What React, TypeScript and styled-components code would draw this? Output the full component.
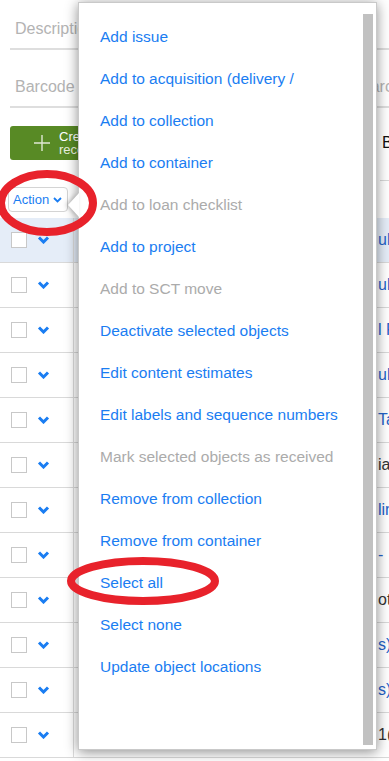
import styled, { createGlobalStyle } from "styled-components";

const GlobalStyle = createGlobalStyle`
  html, body {
    margin: 0;
    padding: 0;
    background: #fff;
  }
  body {
    font-family: "Liberation Sans", Arial, sans-serif;
  }
`;

const menuItems: { label: string; disabled?: boolean }[] = [
  { label: "Add issue" },
  { label: "Add to acquisition (delivery /" },
  { label: "Add to collection" },
  { label: "Add to container" },
  { label: "Add to loan checklist", disabled: true },
  { label: "Add to project" },
  { label: "Add to SCT move", disabled: true },
  { label: "Deactivate selected objects" },
  { label: "Edit content estimates" },
  { label: "Edit labels and sequence numbers" },
  { label: "Mark selected objects as received", disabled: true },
  { label: "Remove from collection" },
  { label: "Remove from container" },
  { label: "Select all" },
  { label: "Select none" },
  { label: "Update object locations" },
];

const rows: { tail: string; link: boolean }[] = [
  { tail: "ublication", link: true },
  { tail: "ublication", link: true },
  { tail: "l Files", link: true },
  { tail: "ublication", link: true },
  { tail: " Tapes", link: true },
  { tail: "ials", link: false },
  { tail: "lines", link: true },
  { tail: "-", link: true },
  { tail: "otes", link: false },
  { tail: "s)", link: true },
  { tail: "s)", link: true },
  { tail: "1(", link: false },
];

export default function App() {
  return (
    <Page>
      <GlobalStyle />

      <FieldRow>
        <Field $wide>Description</Field>
      </FieldRow>
      <FieldRow>
        <Field>Barcode</Field>
        <Field>Barcode</Field>
      </FieldRow>

      <Toolbar>
        <CreateButton>
          <PlusIcon viewBox="0 0 16 16">
            <path d="M8 0v16M0 8h16" />
          </PlusIcon>
          <CreateText>
            <span>Create new</span>
            <small>record</small>
          </CreateText>
        </CreateButton>
        <ToolbarLabel>Browse</ToolbarLabel>
      </Toolbar>

      <ActionRow>
        <ActionButton>
          Action
          <svg width="9" height="6" viewBox="0 0 9 6">
            <path d="M1 1l3.5 3.5L8 1" fill="none" stroke="#1a7df2" strokeWidth="1.8" />
          </svg>
        </ActionButton>
        <ActionRule />
      </ActionRow>

      <Table>
        {rows.map((row, i) => (
          <Row key={i} $selected={i === 0}>
            <SelectCell>
              <Box />
              <Chevron viewBox="0 0 12 8">
                <path d="M1.5 1.5L6 6l4.5-4.5" />
              </Chevron>
            </SelectCell>
            <MidCell />
            <TailCell $link={row.link}>{row.tail}</TailCell>
          </Row>
        ))}
      </Table>

      <Menu>
        <Arrow />
        <MenuList>
          {menuItems.map((item) => (
            <MenuItem key={item.label} $disabled={item.disabled}>
              {item.label}
            </MenuItem>
          ))}
        </MenuList>
        <ScrollTrack>
          <ScrollThumb />
        </ScrollTrack>
      </Menu>

      <Marks viewBox="0 0 389 761">
        <ellipse cx="47" cy="203" rx="46" ry="29" />
        <ellipse cx="143" cy="581" rx="72" ry="20" />
      </Marks>
    </Page>
  );
}

const Page = styled.div`
  position: relative;
  width: 389px;
  height: 761px;
  overflow: hidden;
  padding-top: 10px;
  box-sizing: border-box;
`;

const FieldRow = styled.div`
  display: grid;
  grid-template-columns: 345px 1fr;
  padding-left: 10px;
  margin-bottom: 18px;
`;

const Field = styled.div<{ $wide?: boolean }>`
  grid-column: ${(p) => (p.$wide ? "1 / 3" : "auto")};
  height: 38px;
  border-bottom: 2px solid #dedede;
  display: flex;
  align-items: center;
  padding-left: 5px;
  font-size: 16px;
  color: #b3b3b3;
  white-space: nowrap;
  overflow: hidden;
`;

const Toolbar = styled.div`
  display: grid;
  grid-template-columns: 372px 1fr;
  align-items: center;
  padding-left: 10px;
  margin-top: 2px;
`;

const CreateButton = styled.div`
  display: flex;
  align-items: center;
  gap: 9px;
  width: 160px;
  height: 34px;
  padding-left: 24px;
  box-sizing: border-box;
  background: #588a25;
  border-radius: 3px;
  color: #fff;
`;

const PlusIcon = styled.svg`
  width: 16px;
  height: 16px;
  stroke: #dfe8d3;
  stroke-width: 1.4;
  fill: none;
`;

const CreateText = styled.div`
  display: flex;
  flex-direction: column;
  font-size: 13px;
  line-height: 13px;
  small {
    font-size: 13px;
    color: #e8efdf;
  }
`;

const ToolbarLabel = styled.div`
  font-size: 16px;
  color: #111;
  white-space: nowrap;
`;

const ActionRow = styled.div`
  display: grid;
  grid-template-columns: 372px 1fr;
  height: 38px;
  margin-top: 20px;
  padding-left: 8px;
  box-sizing: border-box;
`;

const ActionButton = styled.div`
  justify-self: start;
  align-self: start;
  margin-top: 7px;
  height: 25px;
  display: flex;
  align-items: center;
  gap: 4px;
  padding: 0 5px 0 4px;
  border: 1px solid #d4d4d4;
  border-radius: 4px;
  box-sizing: border-box;
  font-size: 13px;
  color: #1a7df2;
`;

const ActionRule = styled.div`
  border-top: 1px solid #d8d8d8;
`;

const Table = styled.div`
  display: flex;
  flex-direction: column;
`;

const Row = styled.div<{ $selected?: boolean }>`
  display: grid;
  grid-template-columns: 74px 304px 1fr;
  height: 45px;
  border-bottom: 1px solid #d9d9d9;
  box-sizing: border-box;
  background: ${(p) => (p.$selected ? "#e5edf8" : "#fff")};
`;

const SelectCell = styled.div`
  display: flex;
  align-items: center;
  gap: 10px;
  padding-left: 11px;
  border-right: 1px solid #dcdcdc;
`;

const Box = styled.div`
  width: 16px;
  height: 16px;
  box-sizing: border-box;
  border: 1px solid #c8c8c8;
  background: #fff;
`;

const Chevron = styled.svg`
  width: 13px;
  height: 8px;
  fill: none;
  stroke: #1a7df2;
  stroke-width: 3;
`;

const MidCell = styled.div``;

const TailCell = styled.div<{ $link: boolean }>`
  display: flex;
  align-items: center;
  font-size: 16px;
  white-space: nowrap;
  color: ${(p) => (p.$link ? "#2463c9" : "#333")};
`;

const Menu = styled.div`
  position: absolute;
  left: 78px;
  top: 2px;
  width: 299px;
  height: 748px;
  box-sizing: border-box;
  display: flex;
  background: #fff;
  border: 1px solid #c9c9c9;
  box-shadow: 0 2px 12px rgba(0, 0, 0, 0.45);
`;

const Arrow = styled.div`
  position: absolute;
  left: -11px;
  top: 190px;
  width: 0;
  height: 0;
  border-top: 12px solid transparent;
  border-bottom: 12px solid transparent;
  border-right: 11px solid #fff;
  filter: drop-shadow(-2px 0 2px rgba(0, 0, 0, 0.25));
`;

const MenuList = styled.div`
  flex: 1;
  padding-top: 13px;
  overflow: hidden;
`;

const MenuItem = styled.div<{ $disabled?: boolean }>`
  height: 42px;
  display: flex;
  align-items: center;
  padding-left: 21px;
  font-size: 15.5px;
  white-space: nowrap;
  color: ${(p) => (p.$disabled ? "#ababab" : "#1a7df2")};
`;

const ScrollTrack = styled.div`
  width: 10px;
  margin-right: 3px;
  padding: 11px 0 4px;
  display: flex;
`;

const ScrollThumb = styled.div`
  flex: 1;
  background: #c1c1c1;
`;

const Marks = styled.svg`
  position: absolute;
  inset: 0;
  width: 389px;
  height: 761px;
  pointer-events: none;
  ellipse {
    fill: none;
    stroke: #e8222b;
    stroke-width: 8;
  }
`;
